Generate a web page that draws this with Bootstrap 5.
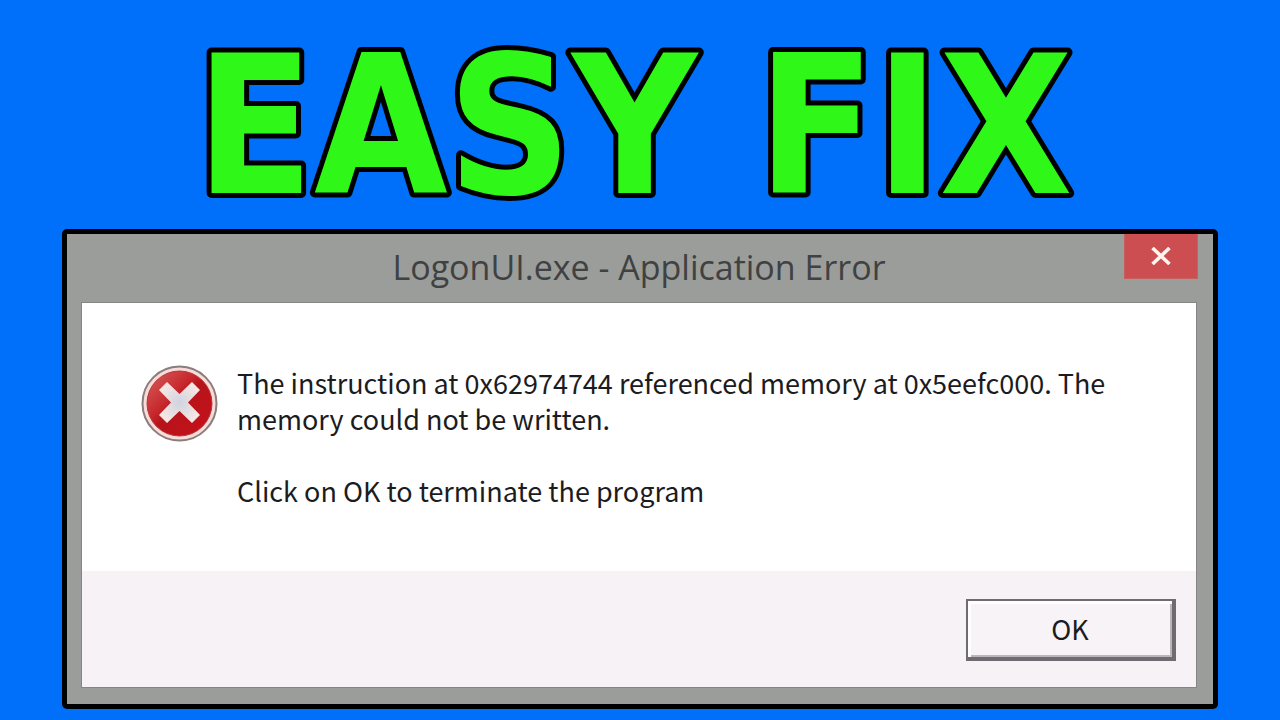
<!DOCTYPE html>
<html lang="en">
<head>
<meta charset="utf-8">
<meta name="viewport" content="width=device-width, initial-scale=1">
<title>Easy Fix</title>
<link href="https://cdn.jsdelivr.net/npm/bootstrap@5.3.0/dist/css/bootstrap.min.css" rel="stylesheet">
<style>
  body { background: #0070fb; font-family: "Noto Sans CJK SC", "Open Sans", sans-serif; color: #1c1c1e; }
  .page { padding: 24px 62px 11px; }
  .headline { height: 205px; }
  .headline svg { width: 100%; height: 100%; overflow: visible; }
  .headline text {
    font: 700 192px "DejaVu Sans Condensed", "DejaVu Sans", sans-serif;
    fill: #2ff818; stroke: #000; stroke-width: 10px; stroke-linejoin: round; paint-order: stroke fill;
    text-anchor: middle;
  }
  .window { background: #9b9d9a; border: 5px solid #000; border-radius: 5px; padding: 0 16px 16px 14px; }
  .titlebar { min-height: 68px; }
  .window-title { font: 400 34px/66px "Open Sans", sans-serif; color: #404142; }
  .close-button { width: 74px; height: 45px; right: -1px; background: #cc4e50; border: 1px solid #c4605e; border-top: 0; }
  .client { background: #fff; border: 1px solid #858585; }
  .message { padding: 62px 59px 62px; gap: 19px; }
  .message p { font-size: 27px; line-height: 36px; }
  .message p + p { margin-top: 36px; }
  .actions { background: #f6f2f6; padding: 28px 20px 26px; }
  .ok-button {
    width: 210px; height: 62px; font-size: 27px; line-height: 36px; color: #1c1c1e;
    background: #f7f3f7; border: 2px solid #6f6b70; border-right-width: 4px; border-bottom-width: 4px;
    box-shadow: inset 3px 3px 0 #fff, inset -2px -2px 0 #bab6bb;
  }
</style>
</head>
<body>
<main class="page container-fluid">
  <h1 class="headline m-0"><svg><text x="49.5%" y="169">EASY FIX</text></svg></h1>
  <section class="window" role="alertdialog" aria-labelledby="dialog-title" aria-describedby="dialog-message">
    <header class="titlebar position-relative text-center">
      <h2 class="window-title m-0" id="dialog-title">LogonUI.exe - Application Error</h2>
      <button class="close-button position-absolute top-0 p-0 d-flex align-items-center justify-content-center" type="button" aria-label="Close">
        <svg width="20" height="18" viewBox="0 0 20 18" fill="none" stroke="#fff4f0" stroke-width="3.6" aria-hidden="true"><path d="M1.5 1 18.5 17M18.5 1 1.5 17"/></svg>
      </button>
    </header>
    <div class="client">
      <div class="message d-flex align-items-start" id="dialog-message">
        <svg class="flex-shrink-0" width="77" height="77" viewBox="0 0 77 77" aria-hidden="true">
          <defs>
            <linearGradient id="disc" x1="0" y1="0" x2="1" y2="1">
              <stop offset="0" stop-color="#d9605f"/><stop offset=".38" stop-color="#c6292d"/>
              <stop offset=".5" stop-color="#b5141b"/><stop offset="1" stop-color="#c9101a"/>
            </linearGradient>
            <radialGradient id="cross">
              <stop offset="0" stop-color="#cfd3df"/><stop offset="1" stop-color="#f3e6e4"/>
            </radialGradient>
          </defs>
          <circle cx="38.500" cy="38.500" r="37" fill="#f7dcda" stroke="#8d7c7c" stroke-width="2"/>
          <circle cx="38.500" cy="38.500" r="32.500" fill="url(#disc)" stroke="#b5363a"/>
          <path d="M26 17 38.500 29 51 17 59 25 47 37.500 59 50 51 58 38.500 46 26 58 18 50 30 37.500 18 25Z" fill="url(#cross)"/>
        </svg>
        <div>
          <p class="mb-0">The instruction at 0x62974744 referenced memory at 0x5eefc000. The<br>memory could not be written.</p>
          <p class="mb-0">Click on OK to terminate the program</p>
        </div>
      </div>
      <footer class="actions d-flex justify-content-end">
        <button class="ok-button p-0" type="button">OK</button>
      </footer>
    </div>
  </section>
</main>
<script src="https://cdn.jsdelivr.net/npm/bootstrap@5.3.0/dist/js/bootstrap.bundle.min.js"></script>
</body>
</html>
